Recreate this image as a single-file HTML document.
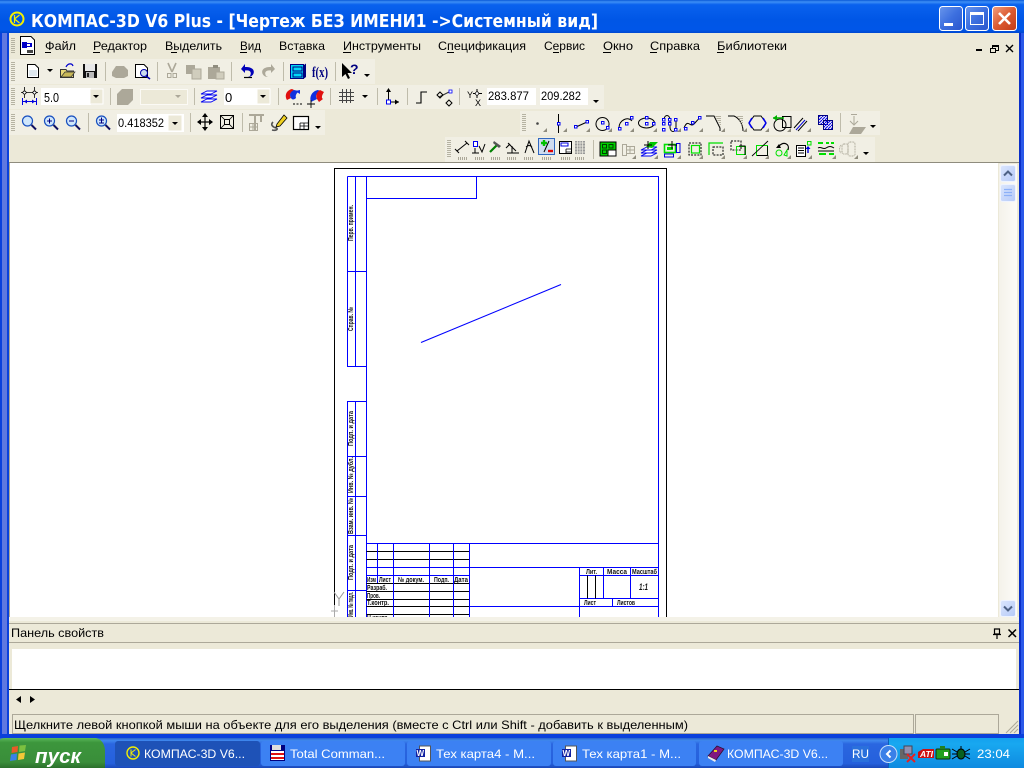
<!DOCTYPE html>
<html><head><meta charset="utf-8"><title>КОМПАС-3D V6 Plus</title>
<style>
html,body{margin:0;padding:0;width:1024px;height:768px;overflow:hidden;background:#ece9d8}
svg{display:block;position:absolute;left:0;top:0}
text{font-family:"Liberation Sans",sans-serif;font-size:12px;fill:#000}
.m{font-size:12px}
.d{font-size:7px;font-weight:bold;fill:#111;font-family:"Liberation Sans",sans-serif}
.w{fill:#fff}
.tb{fill:#fff;font-size:12px}
</style></head><body>
<svg width="1024" height="768" viewBox="0 0 1024 768" xmlns="http://www.w3.org/2000/svg">
<defs>
<linearGradient id="tg" x1="0" y1="0" x2="0" y2="1"><stop offset="0" stop-color="#0a5ad8"/><stop offset=".06" stop-color="#3d8ff5"/><stop offset=".14" stop-color="#0a62ee"/><stop offset=".6" stop-color="#0056e6"/><stop offset=".9" stop-color="#0056e8"/><stop offset="1" stop-color="#0048d0"/></linearGradient>
<linearGradient id="tk" x1="0" y1="0" x2="0" y2="1"><stop offset="0" stop-color="#2a62c8"/><stop offset=".08" stop-color="#3f88ee"/><stop offset=".2" stop-color="#2a66e0"/><stop offset=".85" stop-color="#2560dc"/><stop offset="1" stop-color="#1a48b8"/></linearGradient>
<linearGradient id="st" x1="0" y1="0" x2="0" y2="1"><stop offset="0" stop-color="#5cb85c"/><stop offset=".15" stop-color="#3c963c"/><stop offset=".8" stop-color="#3a8e3a"/><stop offset="1" stop-color="#2b702b"/></linearGradient>
<linearGradient id="tr" x1="0" y1="0" x2="0" y2="1"><stop offset="0" stop-color="#14a0ee"/><stop offset=".2" stop-color="#18a8f0"/><stop offset="1" stop-color="#0e8ae0"/></linearGradient>
<linearGradient id="bb" x1="0" y1="0" x2="1" y2="1"><stop offset="0" stop-color="#6a96ec"/><stop offset=".5" stop-color="#3c6fdf"/><stop offset="1" stop-color="#2a55cc"/></linearGradient>
<linearGradient id="rb" x1="0" y1="0" x2="1" y2="1"><stop offset="0" stop-color="#f0a080"/><stop offset=".5" stop-color="#dc5a30"/><stop offset="1" stop-color="#c03a18"/></linearGradient>
<linearGradient id="sb" x1="0" y1="0" x2="1" y2="1"><stop offset="0" stop-color="#dbe6fd"/><stop offset="1" stop-color="#b5c9f8"/></linearGradient>
<linearGradient id="sc" x1="0" y1="0" x2="1" y2="0"><stop offset="0" stop-color="#f4f2ea"/><stop offset="1" stop-color="#fcfbf8"/></linearGradient>
<pattern id="grip" width="4" height="2" patternUnits="userSpaceOnUse"><rect width="4" height="1" fill="#b5b2a2"/></pattern>
<pattern id="ht" width="3" height="3" patternUnits="userSpaceOnUse"><path d="M0 3L3 0" stroke="#00f" stroke-width="1"/></pattern>
</defs>

<!-- window frame -->
<rect width="1024" height="738" fill="#0a40dc"/>
<rect x="2" y="33" width="5" height="705" fill="#5f78e0"/>
<rect x="1021" y="33" width="3" height="705" fill="#2a58e8"/>
<rect x="1019" y="33" width="2" height="705" fill="#0a2fc8"/>
<rect width="1024" height="33" fill="url(#tg)"/>
<rect x="9" y="33" width="1010" height="701" fill="#ece9d8"/>

<!-- title -->
<g transform="translate(17,19)"><circle r="6.5" fill="none" stroke="#f4f000" stroke-width="2"/><path d="M-2.5 -4V4M-2.5 0L2.5 -4M-2.5 0L2.5 4" stroke="#f4f000" stroke-width="1.2" fill="none"/></g>
<text x="31" y="27" textLength="567" lengthAdjust="spacingAndGlyphs" style="font-family:'DejaVu Sans',sans-serif;font-weight:bold;font-size:18px;fill:#fff">КОМПАС-3D V6 Plus - [Чертеж БЕЗ ИМЕНИ1 -&gt;Системный вид]</text>
<!-- window buttons -->
<rect x="939.5" y="6.5" width="23" height="24" rx="3" fill="url(#bb)" stroke="#fff"/>
<rect x="944" y="23" width="9" height="3" fill="#fff"/>
<rect x="965.5" y="6.5" width="23" height="24" rx="3" fill="url(#bb)" stroke="#fff"/>
<rect x="970.5" y="12.5" width="13" height="12" fill="none" stroke="#fff"/><rect x="970" y="12" width="14" height="3" fill="#fff"/>
<rect x="992.5" y="6.5" width="24" height="24" rx="3" fill="url(#rb)" stroke="#fff"/>
<path d="M999 13L1010 24M1010 13L999 24" stroke="#fff" stroke-width="2.6"/>

<!-- menu -->
<rect x="11" y="37" width="4" height="16" fill="url(#grip)"/>
<g>
<path d="M20.5 36.5H31L34.5 40V54.5H20.5Z" fill="#fff" stroke="#000"/>
<rect x="22" y="42" width="5" height="6" fill="#0000c8"/><path d="M27 43H32V47H27Z" fill="#0000c8"/><rect x="27" y="44" width="3" height="2" fill="#fff"/>
<rect x="27" y="50" width="6" height="3" fill="#444"/>
</g>
<g class="m">
<text x="45" y="50" textLength="31" lengthAdjust="spacingAndGlyphs">Файл</text>
<text x="93" y="50" textLength="54" lengthAdjust="spacingAndGlyphs">Редактор</text>
<text x="165" y="50" textLength="57" lengthAdjust="spacingAndGlyphs">Выделить</text>
<text x="240" y="50" textLength="21" lengthAdjust="spacingAndGlyphs">Вид</text>
<text x="279" y="50" textLength="46" lengthAdjust="spacingAndGlyphs">Вставка</text>
<text x="343" y="50" textLength="78" lengthAdjust="spacingAndGlyphs">Инструменты</text>
<text x="438" y="50" textLength="88" lengthAdjust="spacingAndGlyphs">Спецификация</text>
<text x="544" y="50" textLength="41" lengthAdjust="spacingAndGlyphs">Сервис</text>
<text x="603" y="50" textLength="30" lengthAdjust="spacingAndGlyphs">Окно</text>
<text x="650" y="50" textLength="50" lengthAdjust="spacingAndGlyphs">Справка</text>
<text x="717" y="50" textLength="70" lengthAdjust="spacingAndGlyphs">Библиотеки</text>
</g>
<path d="M45 52.5H51M93 52.5H100M171 52.5H177M240 52.5H247M298 52.5H304M343 52.5H351M447 52.5H454M553 52.5H559M603 52.5H611M650 52.5H657M717 52.5H724" stroke="#000" shape-rendering="crispEdges"/>
<rect x="976" y="49" width="6" height="2" fill="#000"/>
<rect x="992.5" y="45.5" width="6" height="5" fill="none" stroke="#000"/><rect x="992" y="45" width="7" height="2" fill="#000"/><rect x="990.5" y="48.5" width="5" height="4" fill="#ece9d8" stroke="#000"/>
<path d="M1006 45L1013 52M1013 45L1006 52" stroke="#000" stroke-width="1.4"/>

<!-- toolbar bands -->
<rect x="9" y="59" width="366" height="25" fill="#f1efe4"/>
<rect x="9" y="85" width="595" height="24" fill="#f1efe4"/>
<rect x="9" y="110" width="316" height="25" fill="#f1efe4"/>
<rect x="520" y="111" width="360" height="24" fill="#f1efe4"/>
<rect x="445" y="137" width="430" height="25" fill="#f1efe4"/>
<rect x="11" y="62" width="4" height="20" fill="url(#grip)"/>
<rect x="11" y="88" width="4" height="18" fill="url(#grip)"/>
<rect x="11" y="114" width="4" height="18" fill="url(#grip)"/>
<rect x="522" y="114" width="4" height="18" fill="url(#grip)"/>
<rect x="447" y="140" width="4" height="18" fill="url(#grip)"/>

<!-- separators -->
<path d="M105.5 62V81M157.5 62V81M231.5 62V81M283.5 62V81M335.5 62V81M110.5 88V105M194.5 88V105M278.5 88V105M330.5 88V105M377.5 88V105M407.5 88V105M459.5 88V105M88.5 113V132M190.5 113V132M242.5 113V132M840.5 113V132M593.5 140V159" stroke="#bfbcab" shape-rendering="crispEdges"/>

<!-- TB1 -->
<path d="M27.5 64.5H35L38.5 68V77.5H27.5Z" fill="#fff" stroke="#000"/><path d="M29 70H37V76H29Z" fill="#dfe8ee"/>
<path d="M47 69H53L50 72Z" fill="#000"/>
<path d="M60.5 69.5H66L67 71H73.5V77.5H60.5Z" fill="#e8d878" stroke="#333"/><path d="M61 77L65 72H75L71 77Z" fill="#c8b858" stroke="#333" stroke-width=".7"/><path d="M66 67C68 63 72 63 73 66" fill="none" stroke="#00c" stroke-width="1.2"/>
<rect x="83" y="64" width="14" height="14" fill="#111"/><rect x="85" y="64" width="10" height="7" fill="#e8e8e8"/><rect x="86" y="72" width="8" height="6" fill="#bbb"/><rect x="87" y="73" width="2" height="4" fill="#222"/>
<path d="M112 72L116 66H124L128 70V76L124 78H116L112 76Z" fill="#aca899"/>
<path d="M135.5 64.5H144L147.5 68V77.5H135.5Z" fill="#fff" stroke="#000"/><circle cx="144" cy="73" r="3.5" fill="#cde" stroke="#00a"/><path d="M146 76L150 79" stroke="#00a" stroke-width="1.6"/>
<path d="M168 63L172 72M176 63L172 72" stroke="#aca899" stroke-width="1.6"/><rect x="167.5" y="73.5" width="3.5" height="4" fill="none" stroke="#aca899"/><rect x="173" y="73.5" width="3.5" height="4" fill="none" stroke="#aca899"/>
<path d="M186 65H195V74H186Z" fill="#aca899"/><path d="M192 69H201V79H192Z" fill="#d0cdbd" stroke="#aca899"/>
<path d="M208 67H220V79H208Z" fill="#aca899"/><rect x="213" y="65" width="5" height="3" fill="#8f8c7e"/><rect x="216" y="72" width="8" height="7" fill="#d0cdbd" stroke="#aca899"/>
<path d="M245 64L241 69L245 73V70.5C250 70 252 72 250 76L248 77C254 77 256 70 251 68C249 67 247 67 245 67Z" fill="#0000b8"/><path d="M244 77.5H252" stroke="#000" stroke-width="1.2"/>
<path d="M271 64L275 69L271 73V70.5C266 70 264 72 266 76L268 77C262 77 260 70 265 68C267 67 269 67 271 67Z" fill="#aca899"/>
<rect x="290.5" y="64.5" width="13" height="14" fill="#00d8f8" stroke="#000080"/><path d="M304 65L306 63.5V77L304 78.5Z" fill="#000080"/><rect x="293" y="67" width="9" height="4" fill="#00d8f8" stroke="#000080"/><rect x="293" y="73" width="9" height="4" fill="#00d8f8" stroke="#000080"/>
<text x="312" y="77" style="font-family:'Liberation Serif',serif;font-weight:bold;font-size:15px;fill:#000080" textLength="16" lengthAdjust="spacingAndGlyphs">f(x)</text>
<path d="M342 63V77L345.5 74L348 79L350 78L347.5 73L352 73Z" fill="#000"/>
<text x="350" y="74" style="font-family:'Liberation Sans',sans-serif;font-weight:bold;font-size:14px;fill:#000080">?</text>
<path d="M364 74H370L367 77Z" fill="#000"/>

<!-- TB2 -->
<path d="M24.5 90.5L26.5 92.5L24.5 94.5L22.5 92.5ZM34.5 90.5L36.5 92.5L34.5 94.5L32.5 92.5Z" fill="#fff" stroke="#000" stroke-width=".8"/><path d="M24.5 87V90M24.5 95V98M34.5 87V90M34.5 95V98M21 92.5H23M26 92.5H33M36 92.5H38" stroke="#000" stroke-width=".8"/>
<path d="M22.5 98V105M36.5 98V105M23 101.5H36" stroke="#0000e0"/><path d="M24 101.5L27 99.5V103.5ZM35 101.5L32 99.5V103.5Z" fill="#0000e0"/>
<rect x="41" y="88" width="50" height="17" fill="#fff"/>
<text x="44" y="102" style="font-size:13px" textLength="15" lengthAdjust="spacingAndGlyphs">5.0</text>
<rect x="90" y="89" width="13" height="15" fill="#ece9d8" stroke="#fff"/><path d="M93 95H99L96 98Z" fill="#000"/>
<path d="M117 94L122 89H133V100L128 105H117Z" fill="#aca899"/>
<rect x="140.5" y="89.5" width="47" height="15" fill="#ece9d8" stroke="#fbfaf5"/><path d="M175 95H181L178 98Z" fill="#aca899"/>
<path d="M201 102L207 99H217L211 102Z M201 98L207 95H217L211 98Z M201 94L207 91H217L211 94Z" fill="#fff" stroke="#0000f0" stroke-width=".9"/>
<rect x="224" y="88" width="46" height="17" fill="#fff"/>
<text x="225" y="102" style="font-size:13px">0</text>
<rect x="257" y="89" width="13" height="15" fill="#ece9d8" stroke="#fff"/><path d="M260 95H266L263 98Z" fill="#000"/>
<path d="M287 100C284 95 287 90 292 89L294 90C290 93 289 95 291 98Z" fill="#e01010"/><path d="M291 98C289 95 290 92 294 90L299 91C297 93 295 95 296 98C294 100 292 100 291 98Z" fill="#1030e0"/><path d="M295 91L300 90V94Z" fill="#1030e0"/>
<path d="M293 104H295M296.5 104H298.5M300 104H302" stroke="#000"/>
<path d="M311 102C309 97 312 91 318 90L320 91C316 94 315 96 317 99Z" fill="#1030e0"/><path d="M317 99C315 95 317 92 320 90L324 92C322 95 321 98 323 99L319 102Z" fill="#e01010"/>
<path d="M311 100V108M307 104H315" stroke="#000" stroke-width=".9"/>
<path d="M339 92.5H354M339 96.5H354M339 100.5H354M342.5 89V103M346.5 89V103M350.5 89V103" stroke="#444" shape-rendering="crispEdges"/>
<path d="M362 95H368L365 98Z" fill="#000"/>
<path d="M388.5 90V102H399" fill="none" stroke="#000"/><path d="M388.5 88L386 92H391ZM399 102L395 99.5V104.5Z" fill="#000"/><rect x="386.5" y="100" width="4" height="4" fill="#fff" stroke="#0000f0"/>
<path d="M416 103H421V92H427" fill="none" stroke="#000" stroke-width="1.1"/>
<path d="M439 97L451 91" stroke="#333"/>
<path d="M440 92L443 95L440 98L437 95ZM449 100L452 103L449 106L446 103Z" fill="none" stroke="#000"/><rect x="449" y="90" width="3" height="3" fill="#fff" stroke="#00f" stroke-width=".8"/>
<text x="467" y="98" style="font-size:9px">Y</text><text x="475" y="106" style="font-size:9px">X</text>
<path d="M477 89V98M473 93.5H482" stroke="#000"/><path d="M477 91L479 93.5L477 96L475 93.5Z" fill="#fff" stroke="#000" stroke-width=".7"/>
<rect x="487" y="88" width="49" height="17" fill="#fff"/>
<text x="488" y="100" textLength="41" lengthAdjust="spacingAndGlyphs">283.877</text>
<rect x="540" y="88" width="48" height="17" fill="#fff"/>
<text x="541" y="100" textLength="40" lengthAdjust="spacingAndGlyphs">209.282</text>
<path d="M593 100H599L596 103Z" fill="#000"/>

<!-- TB3 -->
<g fill="#cfe6fb" stroke="#1850c0" stroke-width="1.2">
<circle cx="27.5" cy="121" r="5"/><circle cx="49.5" cy="121" r="5"/><circle cx="71.5" cy="121" r="5"/><circle cx="101.5" cy="121" r="5"/>
</g>
<path d="M31.5 125L36 129.5M53.5 125L58 129.5M75.5 125L80 129.5M105.5 125L110 129.5" stroke="#101060" stroke-width="2"/>
<path d="M47 121H52M49.5 118.5V123.5M69 121H74M99 120H104M101.5 117.5V122.5M99 123H104" stroke="#000080" stroke-width="1"/>
<rect x="117" y="114" width="67" height="18" fill="#fff"/>
<text x="118" y="127" textLength="46" lengthAdjust="spacingAndGlyphs">0.418352</text>
<rect x="168" y="115" width="14" height="16" fill="#ece9d8" stroke="#fff"/><path d="M172 122H178L175 125Z" fill="#000"/>
<path d="M205 115V129M198 122H212" stroke="#000" stroke-width="1.2"/><path d="M205 113L202 117H208ZM205 131L202 127H208ZM197 122L201 119V125ZM213 122L209 119V125Z" fill="#000"/>
<rect x="220.5" y="115.5" width="13" height="13" fill="none" stroke="#000"/><rect x="224.5" y="119.5" width="5" height="5" fill="none" stroke="#000"/><path d="M221 116L225 120M233 116L229 120M221 128L225 124M233 128L229 124" stroke="#000" stroke-width=".8"/>
<path d="M249 115H264M255 115V130M261 115V122" stroke="#aca899" stroke-width="2" fill="none"/><rect x="249.5" y="123.5" width="8" height="7" fill="none" stroke="#aca899"/><path d="M249.5 127H257M253 124V130" stroke="#aca899"/>
<path d="M273 122C270 125 273 127 276 128C279 129 276 131 272 130" fill="none" stroke="#555" stroke-width="1.6"/><path d="M277 124L284 115L287 118L280 126L276 127Z" fill="#f0d020" stroke="#000" stroke-width=".8"/>
<rect x="293.5" y="116.5" width="15" height="13" fill="#fff" stroke="#000" stroke-width="1.2"/><path d="M300 123H308M300 126H308M300 123V129M304 123V129" stroke="#000" stroke-width=".8"/>
<path d="M315 126H321L318 129Z" fill="#000"/>

<!-- right band row 1 -->
<g fill="none" stroke="#000">
<circle cx="537.5" cy="123.5" r="1.3" fill="#444" stroke="none"/>
<path d="M558.5 114V133"/>
<path d="M576 127L587 122"/>
<path d="M602.5 117.5a6.5 6.5 0 1 0 .01 0Z"/>
<path d="M619 128C619 120 628 116 632 121"/>
<ellipse cx="646.5" cy="123" rx="8" ry="5"/>
<path d="M664 120C664 114 670 114 670 120V127C670 133 676 133 676 127V120"/>
<path d="M684 128C688 118 690 128 694 124C696 122 697 120 700 118"/>
<path d="M706 116H714L720 128V131"/>
<path d="M728 116H734C739 118 743 124 743 131"/>
<circle cx="780" cy="125" r="6"/><rect x="782.5" y="116.5" width="8.5" height="11"/>
</g>
<path d="M773 118H784" stroke="#00b000" stroke-width="1.5"/><path d="M773 118L777 115V121Z" fill="#00b000"/>
<path d="M794 128L803 118M798 131L807 121" stroke="#000"/><path d="M796 130L805 120" stroke="#0000e0"/>
<rect x="818.5" y="115.5" width="9" height="9" fill="url(#ht)" stroke="#000080"/><rect x="823.5" y="120.5" width="9" height="9" fill="url(#ht)" stroke="#000080"/>
<g fill="#fff" stroke="#0000f0">
<rect x="557.5" y="122.5" width="2.5" height="2.5"/><rect x="574.5" y="125.5" width="2.5" height="2.5"/><rect x="586" y="120.5" width="2.5" height="2.5"/><rect x="601.5" y="121.5" width="2.5" height="2.5"/><rect x="606.5" y="126.5" width="2.5" height="2.5"/><rect x="618.5" y="127.5" width="2.5" height="2.5"/><rect x="625.5" y="122.5" width="2.5" height="2.5"/><rect x="630.5" y="116.5" width="2.5" height="2.5"/><rect x="645.5" y="116.5" width="2.5" height="2.5"/><rect x="645.5" y="122.5" width="2.5" height="2.5"/><rect x="652.5" y="122.5" width="2.5" height="2.5"/>
<rect x="662.5" y="118.5" width="2.5" height="2.5"/><rect x="662.5" y="122.5" width="2.5" height="2.5"/><rect x="662.5" y="128.5" width="2.5" height="2.5"/><rect x="668.5" y="118.5" width="2.5" height="2.5"/><rect x="668.5" y="122.5" width="2.5" height="2.5"/><rect x="674.5" y="118.5" width="2.5" height="2.5"/><rect x="674.5" y="128.5" width="2.5" height="2.5"/>
<rect x="684.5" y="127.5" width="2.5" height="2.5"/><rect x="691.5" y="121.5" width="2.5" height="2.5"/><rect x="698.5" y="116.5" width="2.5" height="2.5"/>
</g>
<path d="M754 116H761L766 123L761 130H754L749 123Z" fill="none" stroke="#000"/>
<path d="M749 123L752 118M766 123L763 118M749 123L752 128M766 123L763 128" stroke="#0000f0" stroke-width="1.6"/>
<path d="M715 116H721V127ZM737 116H743V127Z" fill="url(#grip)"/>
<!-- corner triangles -->
<path d="M547 132H543L547 128ZM567 132H563L567 128ZM590 132H586L590 128ZM612 132H608L612 128ZM634 132H630L634 128ZM657 132H653L657 128ZM681 132H677L681 128ZM703 132H699L703 128ZM725 132H721L725 128ZM747 132H743L747 128ZM769 132H765L769 128ZM791 132H787L791 128ZM811 132H807L811 128Z" fill="#8f8c7e"/>
<path d="M854 116V124M850 121L854 125L858 121" fill="none" stroke="#aca899"/><rect x="851" y="114" width="6" height="1" fill="#aca899"/>
<path d="M849 134L853 127H866L861 134Z" fill="#aca899"/>
<path d="M870 125H876L873 128Z" fill="#000"/>

<!-- right band row 2 -->
<rect x="538.5" y="138.5" width="16" height="16" fill="#cfdcf0" stroke="#3168c0"/>
<path d="M541 143H547M544 140V146" stroke="#00c000" stroke-width="2.4"/><path d="M548 151H553" stroke="#e00000" stroke-width="2.4"/><path d="M544 152L549 141" stroke="#000"/>
<g fill="none" stroke="#000">
<path d="M457 151L467 143M455 149L459 153M465 141L469 145"/>
<path d="M475 148V153M472 153H479M479 146L482 152L485 144"/>
<path d="M508 143L516 151"/><path d="M506 148L510 144"/>
<path d="M512 146V153M507 153H519"/>
<path d="M525 153L529 141L534 153M526 147C528 145 530 145 532 147"/>
</g>
<rect x="473.5" y="141.5" width="4" height="5" fill="#fff" stroke="#0000f0"/>
<path d="M490 152L497 145" stroke="#008000" stroke-width="2.2"/><path d="M494 141L501 146L499 148L493 143Z" fill="#555"/>
<rect x="559.5" y="141.5" width="12" height="12" fill="#fff" stroke="#000"/><rect x="561" y="143" width="7" height="3" fill="#fff" stroke="#0000e0"/><path d="M566 149H571M566 152H571M566 149V153" stroke="#000" stroke-width=".8"/>
<rect x="575" y="141" width="10" height="13" fill="#999"/><path d="M575 143H585M575 146H585M575 149H585M575 152H585M577.5 141V154M580 141V154M582.5 141V154" stroke="#f1efe4" stroke-width=".7"/>
<rect x="600" y="142" width="16" height="14" fill="#00d000" stroke="#000"/><rect x="602.5" y="144.5" width="4" height="3.5" fill="none" stroke="#004000"/><rect x="609" y="144.5" width="4" height="3.5" fill="none" stroke="#004000"/><rect x="602.5" y="150" width="4" height="3.5" fill="none" stroke="#004000"/><rect x="608" y="150" width="8" height="6" fill="#fff" stroke="#000"/>
<rect x="622.5" y="144.5" width="4" height="11" fill="none" stroke="#aca899"/><rect x="626.5" y="146.5" width="8" height="7" fill="none" stroke="#aca899"/><path d="M630 146V154M627 150H634" stroke="#aca899"/>
<path d="M641 150L647 147H657L651 150ZM641 153L647 150H657L651 153ZM641 156L647 153H657L651 156Z" fill="#fff" stroke="#0000f0" stroke-width=".9"/><path d="M646 147L650 142H658L652 148Z" fill="#00c800"/><path d="M648 141V149M644 145H652" stroke="#000"/>
<rect x="664.5" y="144.5" width="11" height="8" fill="none" stroke="#00e000" stroke-width="1.6"/><rect x="667" y="147" width="6" height="3" fill="#00e000"/><rect x="664.5" y="154" width="9" height="3" fill="none" stroke="#0000e0"/><rect x="676.5" y="143.5" width="3.5" height="9" fill="none" stroke="#0000e0"/><path d="M672 141V149M668 145H677" stroke="#000"/>
<rect x="689" y="143" width="12" height="12" fill="none" stroke="#000" stroke-dasharray="2 1.2"/><rect x="691.5" y="145.5" width="8" height="7.5" fill="none" stroke="#00e000" stroke-width="1.2"/>
<path d="M709 155V143H723" fill="none" stroke="#00e000" stroke-width="1.2"/><rect x="713" y="147" width="10" height="8" fill="none" stroke="#000" stroke-dasharray="2 1.2"/>
<rect x="731" y="141" width="10" height="9" fill="none" stroke="#000" stroke-dasharray="2 1.2"/><rect x="736.5" y="146.5" width="9" height="8" fill="none" stroke="#00e000"/><path d="M739 146H745V155" fill="none" stroke="#000"/>
<rect x="756.5" y="145.5" width="11" height="10" fill="none" stroke="#00e000"/><path d="M752 156L768 141M767.5 146V155.5H757" fill="none" stroke="#000" stroke-width=".9"/>
<path d="M779 144L776 148L781 148Z" fill="#000"/><path d="M779 146C784 141 790 144 788 150" fill="none" stroke="#000" stroke-width="1.2"/><circle cx="779" cy="153" r="3" fill="none" stroke="#00e000"/><path d="M784 155L787 150V156Z" fill="none" stroke="#00e000"/>
<rect x="796.5" y="145.5" width="9" height="11" fill="#fff" stroke="#000"/><path d="M798 148H804M798 150.5H804M798 153H804" stroke="#000"/>
<rect x="807.5" y="141.5" width="3.5" height="3.5" fill="none" stroke="#00e000"/><path d="M808 153V147" stroke="#0000e0" stroke-width="1.4"/><path d="M808 146L805.5 149H810.5Z" fill="#0000e0"/>
<path d="M818 148C821 146 823 150 826 148S831 146 834 148M818 151H834" fill="none" stroke="#000"/><path d="M818 143H823M826 143H829M831 143H834M819 154H826M829 154H834" stroke="#00e000" stroke-width="2"/>
<g fill="none" stroke="#aca899" stroke-dasharray="1 .6"><rect x="842" y="144" width="6" height="10" rx="2"/><rect x="848" y="142" width="7" height="14" rx="2"/><path d="M841 145C839 148 839 151 841 153"/></g>
<path d="M863 152H869L866 155Z" fill="#000"/>
<path d="M636 159H632L636 155ZM658 159H654L658 155ZM681 159H677L681 155ZM703 159H699L703 155ZM725 159H721L725 155ZM747 159H743L747 155ZM769 159H765L769 155ZM791 159H787L791 155ZM812 159H808L812 155ZM836 159H832L836 155ZM858 159H854L858 155Z" fill="#8f8c7e"/>
<path d="M458 158.5H467M475 158.5H484M491 158.5H500M507 158.5H516M524 158.5H533M542 158.5H551M561 158.5H570M575 158.5H585" stroke="#aca899" stroke-width="3" stroke-dasharray="1 1" fill="none"/>

<!-- canvas -->
<rect x="9" y="162" width="1010" height="1" fill="#8f8c7e"/>
<rect x="10" y="163" width="988" height="454" fill="#fff"/>
<rect x="999" y="164" width="18" height="453" fill="url(#sc)"/>
<rect x="9" y="163" width="1" height="455" fill="#aca899"/>
<rect x="1000.5" y="165.5" width="15" height="16" rx="2" fill="url(#sb)" stroke="#eef3ff"/>
<path d="M1004 175.5L1008 171.5L1012 175.5" fill="none" stroke="#4d6185" stroke-width="2"/>
<rect x="1000.5" y="184.5" width="15" height="17" rx="2" fill="url(#sb)" stroke="#eef3ff"/>
<path d="M1004 189.5H1012M1004 192.5H1012M1004 195.5H1012" stroke="#8cb0f8" stroke-width="1.2"/>
<rect x="1000.5" y="600.5" width="15" height="16" rx="2" fill="url(#sb)" stroke="#eef3ff"/>
<path d="M1004 606.5L1008 610.5L1012 606.5" fill="none" stroke="#4d6185" stroke-width="2"/>

<!-- drawing -->
<svg x="10" y="163" width="988" height="454" viewBox="10 163 988 454">
<g fill="none" shape-rendering="crispEdges">
<path d="M334.5 617V168.5H666.5V617" stroke="#000"/>
<path d="M347.5 176.5H658.5V620M347.5 176.5V366.5H366.5M355.5 176.5V366.5M366.5 176.5V620M347.5 271.5H366.5M366.5 198.5H476.5V176.5" stroke="#00f"/>
<path d="M347.5 620V401.5H366.5M355.5 401.5V620M347.5 456.5H366.5M347.5 496.5H366.5M347.5 535.5H366.5M347.5 590.5H366.5" stroke="#00f"/>
<path d="M366.5 551.5H469.5M366.5 559.5H469.5M366.5 583.5H469.5M366.5 591.5H469.5M366.5 599.5H469.5M366.5 606.5H469.5M366.5 614.5H469.5" stroke="#000"/>
<path d="M366.5 543.5H658.5M366.5 567.5H658.5M366.5 575.5H469.5M377.5 543.5V583M393.5 543.5V620M429.5 543.5V620M453.5 543.5V620M469.5 543.5V620M469.5 606.5H658.5M579.5 567.5V620M603.5 567.5V598.5M630.5 567.5V598.5M579.5 575.5H658.5M579.5 598.5H658.5M612.5 598.5V606.5" stroke="#00f"/>
<path d="M587.5 575.5V598.5M595.5 575.5V598.5" stroke="#000"/>
</g>
<path d="M421 342.5L561 284.5" stroke="#00f" stroke-width="1.1" fill="none"/>
<g stroke="#aaa" fill="none" shape-rendering="crispEdges"><path d="M334.5 605V617M331 611H338"/></g>
<path d="M334 592L339 599L344 592M339 599V606" stroke="#999" fill="none"/>
<text class="d" transform="translate(353,241) rotate(-90)" textLength="36" lengthAdjust="spacingAndGlyphs">Перв. примен.</text>
<text class="d" transform="translate(353,331) rotate(-90)" textLength="24" lengthAdjust="spacingAndGlyphs">Справ. №</text>
<text class="d" transform="translate(353,446) rotate(-90)" textLength="35" lengthAdjust="spacingAndGlyphs">Подп. и дата</text>
<text class="d" transform="translate(353,493) rotate(-90)" textLength="36" lengthAdjust="spacingAndGlyphs">Инв. № дубл.</text>
<text class="d" transform="translate(353,534) rotate(-90)" textLength="36" lengthAdjust="spacingAndGlyphs">Взам. инв. №</text>
<text class="d" transform="translate(353,580) rotate(-90)" textLength="35" lengthAdjust="spacingAndGlyphs">Подп. и дата</text>
<text class="d" transform="translate(353,617) rotate(-90)" textLength="25" lengthAdjust="spacingAndGlyphs">Инв. № подл.</text>
<text class="d" x="367" y="582" textLength="9" lengthAdjust="spacingAndGlyphs">Изм</text>
<text class="d" x="379" y="582" textLength="12" lengthAdjust="spacingAndGlyphs">Лист</text>
<text class="d" x="398" y="582" textLength="26" lengthAdjust="spacingAndGlyphs">№ докум.</text>
<text class="d" x="434" y="582" textLength="15" lengthAdjust="spacingAndGlyphs">Подп.</text>
<text class="d" x="454" y="582" textLength="14" lengthAdjust="spacingAndGlyphs">Дата</text>
<text class="d" x="367" y="590" textLength="20" lengthAdjust="spacingAndGlyphs">Разраб.</text>
<text class="d" x="367" y="598" textLength="13" lengthAdjust="spacingAndGlyphs">Пров.</text>
<text class="d" x="367" y="605" textLength="22" lengthAdjust="spacingAndGlyphs">Т.контр.</text>
<text class="d" x="367" y="620" textLength="22" lengthAdjust="spacingAndGlyphs">Н.контр.</text>
<text class="d" x="586" y="574" textLength="11" lengthAdjust="spacingAndGlyphs">Лит.</text>
<text class="d" x="607" y="574" textLength="20" lengthAdjust="spacingAndGlyphs">Масса</text>
<text class="d" x="632" y="574" textLength="25" lengthAdjust="spacingAndGlyphs">Масштаб</text>
<text class="d" x="584" y="605" textLength="12" lengthAdjust="spacingAndGlyphs">Лист</text>
<text class="d" x="617" y="605" textLength="18" lengthAdjust="spacingAndGlyphs">Листов</text>
<text class="d" x="639" y="590" style="font-size:9px;font-style:italic" textLength="9" lengthAdjust="spacingAndGlyphs">1:1</text>
</svg>
<rect x="9" y="617" width="1010" height="4" fill="#f4f2e8"/>

<!-- properties panel -->
<rect x="9" y="621" width="1010" height="113" fill="#ece9d8"/>
<path d="M9 623.5H1019M9 642.5H1019" stroke="#aca899" shape-rendering="crispEdges"/>
<text x="11" y="637" textLength="93" lengthAdjust="spacingAndGlyphs">Панель свойств</text>
<path d="M994.5 629H999.5V634H994.5ZM993 634.5H1001M997 635V639" fill="none" stroke="#000" stroke-width="1.2"/>
<path d="M1008.5 629.5L1016 637M1016 629.5L1008.5 637" stroke="#000" stroke-width="1.5"/>
<rect x="12" y="649" width="1004" height="40" fill="#fff"/>
<rect x="9" y="689" width="1010" height="1" fill="#000"/>
<path d="M21 696V703L16 699.5Z M30 696V703L35 699.5Z" fill="#000"/>
<rect x="12.5" y="714.5" width="901" height="19" fill="#ece9d8" stroke="#aca899"/>
<rect x="915.5" y="714.5" width="83" height="19" fill="#ece9d8" stroke="#aca899"/>
<text x="14" y="729" textLength="674" lengthAdjust="spacingAndGlyphs">Щелкните левой кнопкой мыши на объекте для его выделения (вместе с Ctrl или Shift - добавить к выделенным)</text>
<path d="M1006 733L1018 721M1010 733L1018 725M1014 733L1018 729" stroke="#aca899"/>

<!-- taskbar -->
<rect y="734" width="1024" height="4" fill="#0a40dc"/>
<rect y="738" width="1024" height="30" fill="url(#tk)"/>
<path d="M0 740Q0 738 6 738H96Q104 740 105 750V768H0Z" fill="url(#st)"/>
<g transform="translate(11,745)">
<path d="M1 2L7 1L6.5 7L0.5 8Z" fill="#e85a28"/><path d="M8.5 0.5L15 0L14 6L8 7Z" fill="#7cc040"/><path d="M0 9.5L6 8.5L5.5 15L-1 16Z" fill="#3a80e8"/><path d="M7.5 8.5L14 7.5L13 14L7 15Z" fill="#f4c838"/>
</g>
<text x="35" y="763" style="font-weight:bold;font-style:italic;font-size:20px;fill:#fff" textLength="46" lengthAdjust="spacingAndGlyphs">пуск</text>
<rect x="115" y="741" width="145" height="25" rx="3" fill="#1e52b7"/>
<rect x="261" y="741" width="144" height="25" rx="3" fill="#3c81f3"/>
<rect x="407" y="741" width="144" height="25" rx="3" fill="#3c81f3"/>
<rect x="553" y="741" width="143" height="25" rx="3" fill="#3c81f3"/>
<rect x="699" y="741" width="144" height="25" rx="3" fill="#3c81f3"/>
<g transform="translate(133,753)"><circle r="6" fill="none" stroke="#f4f000" stroke-width="1.4"/><path d="M-2 -3.5V3.5M-2 0L2.5 -3.5M-2 0L2.5 3.5" stroke="#f4f000" fill="none"/></g>
<rect x="270" y="745" width="15" height="16" fill="#000080"/><rect x="272" y="745" width="9" height="5" fill="#ddd"/><rect x="271" y="751" width="13" height="9" fill="#fff"/><rect x="271" y="753" width="13" height="2" fill="#e01010"/><rect x="271" y="757" width="13" height="2" fill="#e01010"/>
<rect x="419.5" y="746" width="11" height="15" fill="#fff" stroke="#555"/><rect x="416" y="749" width="9" height="8" fill="#1020a0"/><text x="416.5" y="756" style="font-size:8px;fill:#fff;font-weight:bold">W</text>
<rect x="565.5" y="746" width="11" height="15" fill="#fff" stroke="#555"/><rect x="562" y="749" width="9" height="8" fill="#1020a0"/><text x="562.5" y="756" style="font-size:8px;fill:#fff;font-weight:bold">W</text>
<path d="M708 756L717 746L724 749L716 760Z" fill="#801880" stroke="#301030" stroke-width=".8"/><path d="M708 756L716 760L715 762L708 758Z" fill="#eee"/><rect x="714" y="750" width="3" height="2" fill="#f0d020"/>
<text class="tb" x="144" y="758" textLength="101" lengthAdjust="spacingAndGlyphs">КОМПАС-3D V6...</text>
<text class="tb" x="290" y="758" textLength="95" lengthAdjust="spacingAndGlyphs">Total Comman...</text>
<text class="tb" x="436" y="758" textLength="99" lengthAdjust="spacingAndGlyphs">Тех карта4 - М...</text>
<text class="tb" x="582" y="758" textLength="99" lengthAdjust="spacingAndGlyphs">Тех карта1 - М...</text>
<text class="tb" x="727" y="758" textLength="101" lengthAdjust="spacingAndGlyphs">КОМПАС-3D V6...</text>
<rect x="852" y="746" width="17" height="16" fill="#2a70dc"/>
<text class="tb" x="852" y="758" textLength="17" lengthAdjust="spacingAndGlyphs">RU</text>
<rect x="889" y="738" width="135" height="30" fill="url(#tr)"/>
<rect x="888" y="738" width="1" height="30" fill="#0a60b8"/>
<circle cx="888.5" cy="754" r="8.5" fill="#3a80e8" stroke="#c8e0fa"/>
<path d="M890.5 750.5L887 754L890.5 757.5" fill="none" stroke="#fff" stroke-width="2"/>
<rect x="900" y="749" width="8" height="10" fill="#666"/><rect x="904" y="746" width="8" height="8" fill="#9090b0" stroke="#445"/><path d="M907 754L915 762M915 754L907 762" stroke="#e82020" stroke-width="2"/>
<path d="M918 758V752L923 749H934V758Z" fill="#d01010"/><text x="920" y="757" style="font-size:8px;font-weight:bold;font-style:italic;fill:#fff" textLength="13" lengthAdjust="spacingAndGlyphs">ATI</text>
<rect x="936" y="749" width="14" height="10" rx="1" fill="#20a020" stroke="#103010"/><rect x="940" y="746" width="5" height="3" fill="#208020"/><rect x="944" y="752" width="4" height="4" fill="#fff"/>
<ellipse cx="961" cy="754" rx="4" ry="5" fill="#086020" stroke="#000"/><path d="M952 749L957 752M952 754H957M952 759L957 756M970 749L965 752M970 754H965M970 759L965 756M961 749V746" stroke="#000"/>
<text class="tb" x="977" y="758" textLength="33" lengthAdjust="spacingAndGlyphs">23:04</text>
</svg>
</body></html>
